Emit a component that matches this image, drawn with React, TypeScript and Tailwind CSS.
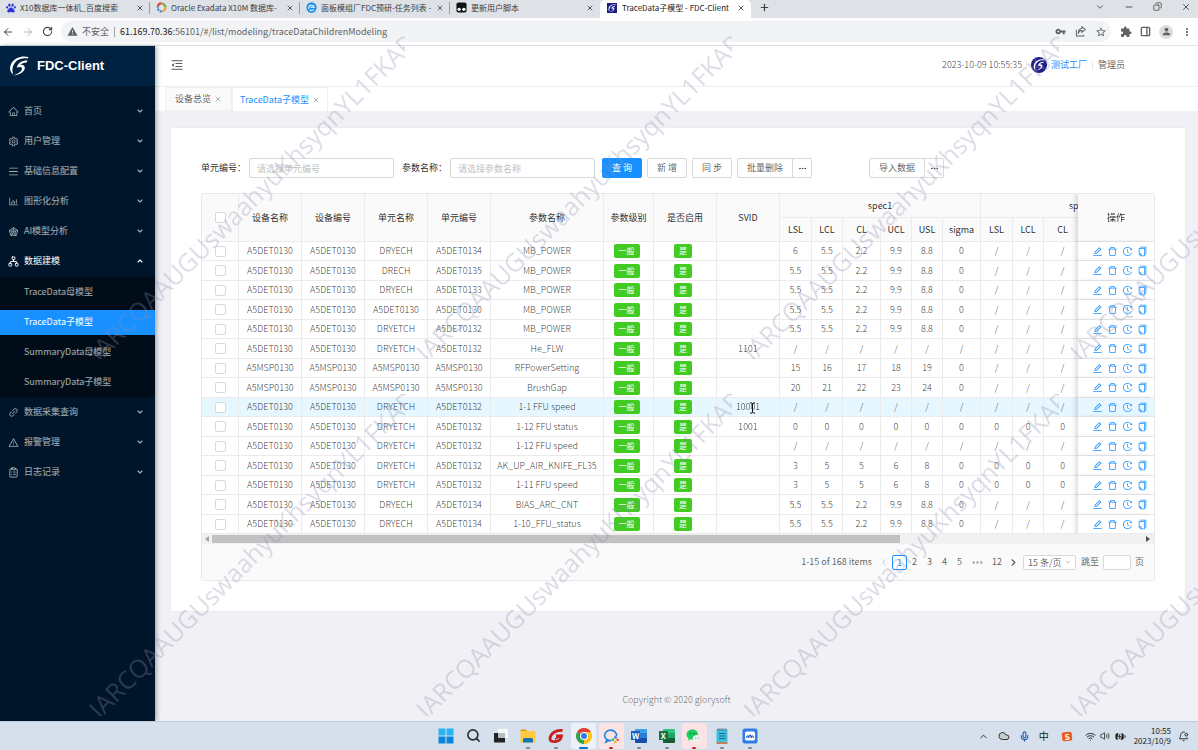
import React from "react";
import {
  AiOutlineHome, AiOutlineSetting, AiOutlineMenu, AiOutlineBarChart, AiOutlineRadarChart, AiOutlineLink,
  AiOutlineWarning, AiOutlineMenuFold, AiOutlineEdit, AiOutlineDelete, AiOutlineHistory, AiOutlineCopy,
} from "react-icons/ai";
import { MdVpnKey, MdExtension, MdPerson, MdWarning, MdMoreVert, MdOutlineStarBorder } from "react-icons/md";
import { FaPaw } from "react-icons/fa";
import {
  ArrowLeft, ArrowRight, RotateCw, X, Plus, ChevronDown, ChevronUp, ChevronLeft, ChevronRight, Minus, Copy, Cloud,
  PanelRight, Network, ClipboardList, Search, Mic, Wifi, Volume2, BatteryCharging, BellDot, Ellipsis,
} from "lucide-react";

function Swoosh({ className }: { className?: string }) {
  return (
    <svg viewBox="0 0 60 62" className={className} fill="currentColor" aria-hidden="true">
      <path d="M58 8C46 5 32 7 23 15C11 26 6 42 12 57C1 50 -1 34 8 20C18 5 40-2 59 3Z" />
      <path d="M56 14L54 20C45 20 38 23 33 28C42 26 49 30 48 38C46 50 30 60 11 60C26 56 38 48 39 40C40 34 33 33 23 36C27 22 38 14 56 14Z" />
    </svg>
  );
}

const browserTabs = [
  { title: "X10数据库一体机_百度搜索", icon: <FaPaw className="size-[10px] text-[#2a35d8]" /> },
  {
    title: "Oracle Exadata X10M 数据库-",
    icon: (
      <svg viewBox="0 0 12 12" className="size-[11px]" fill="none" strokeWidth="2.4">
        <path d="M2 5a4 4 0 0 1 4-3.4" stroke="#e0483b" />
        <path d="M6 1.6A4.3 4.3 0 0 1 10.3 6" stroke="#7a4" />
        <path d="M10.3 6A4.3 4.3 0 0 1 6 10.3" stroke="#e8a33b" />
        <path d="M6 10.3A4.3 4.3 0 0 1 2 5" stroke="#3a85d8" strokeDasharray="2 1" />
      </svg>
    ),
  },
  {
    title: "面板模组厂FDC预研-任务列表 -",
    icon: (
      <svg viewBox="0 0 12 12" className="size-[11px]">
        <circle cx="6" cy="6" r="5.6" fill="#1c8fe8" />
        <path d="M3 7.5a3 3 0 1 1 6-1.8H4.6M4 8.4a3 3 0 0 0 4.6-.4" fill="none" stroke="#fff" strokeWidth="1.1" />
      </svg>
    ),
  },
  {
    title: "更新用户脚本",
    icon: (
      <svg viewBox="0 0 12 12" className="size-[11px]">
        <rect x="0.5" y="0.5" width="11" height="11" rx="2" fill="#111" />
        <circle cx="3.4" cy="8" r="1.8" fill="#fff" />
        <circle cx="8.6" cy="8" r="1.8" fill="#fff" />
      </svg>
    ),
  },
];

function BrowserBar() {
  return (
    <div className="text-[8px] leading-[12px] text-[#3c4043]">
      <div className="flex h-[18px] items-stretch bg-[#dee1e6]">
        {browserTabs.map((t, i) => (
          <div key={t.title} className="flex w-[150px] shrink-0 items-center pb-[3px] pl-[6px]">
            {t.icon}
            <span className="ml-[4px] w-[112px] overflow-hidden whitespace-nowrap">{t.title}</span>
            <button aria-label="关闭标签页" className="ml-auto mr-[5px]"><X className="size-[8px]" strokeWidth={2.6} /></button>
            <span className={i === 3 ? "w-px" : "h-[12px] w-px bg-[#9aa0a6]"} />
          </div>
        ))}
        <div className="flex w-[151px] shrink-0 items-center rounded-t-[5px] bg-white pb-[3px] pl-[7px]">
          <span className="flex size-[10px] items-center justify-center bg-[#1d1e86] text-white"><Swoosh className="size-[8px]" /></span>
          <span className="ml-[5px] overflow-hidden whitespace-nowrap text-[#202124]">TraceData子模型 - FDC-Client</span>
          <button aria-label="关闭标签页" className="ml-auto mr-[6px]"><X className="size-[8px]" strokeWidth={2.6} /></button>
        </div>
        <button aria-label="新标签页" className="ml-[8px] pb-[3px]"><Plus className="size-[11px]" strokeWidth={2.6} /></button>
        <div className="ml-auto flex items-center gap-[19px] pb-[5px] pr-[7px]">
          <ChevronDown className="size-[10px]" />
          <Minus className="size-[10px]" />
          <Copy className="size-[9px] -scale-x-100" />
          <X className="size-[10px]" />
        </div>
      </div>
      <div className="flex h-[28px] items-center border-b border-[#dfe2e7] bg-white pl-[2px] text-[9px]">
        <button aria-label="后退" className="mr-[8px]"><ArrowLeft className="size-[12px] text-[#45484b]" /></button>
        <button aria-label="前进" className="mr-[8px]"><ArrowRight className="size-[12px] text-[#b5b8bb]" /></button>
        <button aria-label="刷新" className="mr-[8px]"><RotateCw className="size-[11px] text-[#45484b]" strokeWidth={2.4} /></button>
        <div className="flex h-[21px] flex-1 items-center rounded-full bg-[#f1f3f4] pl-[6px] pr-[4px]">
          <MdWarning className="size-[11px] text-[#5f6368]" />
          <span className="ml-[4px] text-[#5f6368]">不安全</span>
          <span className="mx-[5px] h-[10px] w-px bg-[#9aa0a6]" />
          <span className="whitespace-nowrap text-[#5f6368]"><span className="text-[#202124]">61.169.70.36</span>:56101/#/list/modeling/traceDataChildrenModeling</span>
          <span className="ml-auto flex items-center gap-[9px] text-[#5f6368]">
            <MdVpnKey className="size-[11px]" />
            <svg viewBox="0 0 12 12" className="size-[11px]" fill="none" stroke="currentColor" strokeWidth="1.1">
              <path d="M1.500 4v7h8V9.500M3.500 8.500C4 5.800 5.500 4.800 7.500 4.800V7l3.700-3.200L7.500.8v2C5 3 3.600 5 3.500 8.500z" />
            </svg>
            <MdOutlineStarBorder className="size-[12px]" />
          </span>
        </div>
        <div className="ml-[9px] mr-[5px] flex items-center gap-[8px] text-[#5f6368]">
          <MdExtension className="size-[12px]" />
          <PanelRight className="size-[11px]" strokeWidth={3} />
          <span className="flex size-[14px] items-center justify-center rounded-full bg-[#dadce0]"><MdPerson className="size-[11px]" /></span>
          <MdMoreVert className="size-[12px]" />
        </div>
      </div>
    </div>
  );
}

const menuTop = [
  { label: "首页", Icon: AiOutlineHome },
  { label: "用户管理", Icon: AiOutlineSetting },
  { label: "基础信息配置", Icon: AiOutlineMenu },
  { label: "图形化分析", Icon: AiOutlineBarChart },
  { label: "AI模型分析", Icon: AiOutlineRadarChart },
];
const menuBottom = [
  { label: "数据采集查询", Icon: AiOutlineLink },
  { label: "报警管理", Icon: AiOutlineWarning },
  { label: "日志记录", Icon: ClipboardList },
];
const subMenu = ["TraceData母模型", "TraceData子模型", "SummaryData母模型", "SummaryData子模型"];

function MenuRow({ label, Icon, open }: { label: string; Icon: React.ElementType; open?: boolean }) {
  const Arrow = open ? ChevronUp : ChevronDown;
  return (
    <button className={`flex h-[30px] w-full items-center pl-[8px] pr-[11px] ${open ? "text-white" : "text-white/65"}`}>
      <Icon className="size-[11px]" />
      <span className="ml-[5px]">{label}</span>
      <Arrow className="ml-auto size-[8px]" strokeWidth={3.4} />
    </button>
  );
}

function Sidebar() {
  return (
    <aside className="relative w-[155px] shrink-0 bg-[#001529] text-[9px] leading-[14px] shadow-[2px_0_4px_rgba(0,21,41,0.3)]">
      <div className="flex h-[40px] items-center bg-[#002140] pl-[9px] text-white">
        <Swoosh className="size-[20px]" />
        <h1 className="ml-[8px] font-['Liberation_Sans',sans-serif] text-[13px] font-bold">FDC-Client</h1>
      </div>
      <nav className="pt-[10px]">
        {menuTop.map((m) => <MenuRow key={m.label} {...m} />)}
        <MenuRow label="数据建模" Icon={Network} open />
        <ul className="mt-[1px] bg-[#000c17]">
          {subMenu.map((s, i) => (
            <li key={s} className="flex h-[30px] items-center">
              <a href="#" className={`flex h-[25px] w-full items-center pl-[24px] ${i === 1 ? "bg-[#1890ff] text-white" : "text-white/65"}`}>{s}</a>
            </li>
          ))}
        </ul>
        {menuBottom.map((m) => <MenuRow key={m.label} {...m} />)}
      </nav>
    </aside>
  );
}

const D = "A5DET0130";
const M = "A5MSP0130";
const base = ["5.5", "5.5", "2.2", "9.9", "8.8", "0"];
const none = ["/", "/", "/", "/", "/", "/"];
const zero = ["0", "0", "0", "0", "0", "0"];
const rows: { c: string[]; svid?: string; a: string[]; b: string[] }[] = [
  { c: [D, D, "DRYECH", "A5DET0134", "MB_POWER"], a: ["6", "5.5", "2.2", "9.9", "8.8", "0"], b: none },
  { c: [D, D, "DRECH", "A5DET0135", "MB_POWER"], a: base, b: none },
  { c: [D, D, "DRYECH", "A5DET0133", "MB_POWER"], a: base, b: none },
  { c: [D, D, D, D, "MB_POWER"], a: base, b: none },
  { c: [D, D, "DRYETCH", "A5DET0132", "MB_POWER"], a: base, b: none },
  { c: [D, D, "DRYETCH", "A5DET0132", "He_FLW"], svid: "1101", a: none, b: none },
  { c: [M, M, M, M, "RFPowerSetting"], a: ["15", "16", "17", "18", "19", "0"], b: none },
  { c: [M, M, M, M, "BrushGap"], a: ["20", "21", "22", "23", "24", "0"], b: none },
  { c: [D, D, "DRYETCH", "A5DET0132", "1-1 FFU speed"], svid: "10001", a: none, b: none },
  { c: [D, D, "DRYETCH", "A5DET0132", "1-12 FFU status"], svid: "1001", a: zero, b: zero },
  { c: [D, D, "DRYETCH", "A5DET0132", "1-12 FFU speed"], a: none, b: none },
  { c: [D, D, "DRYETCH", "A5DET0132", "AK_UP_AIR_KNIFE_FL35"], a: ["3", "5", "5", "6", "8", "0"], b: zero },
  { c: [D, D, "DRYETCH", "A5DET0132", "1-11 FFU speed"], a: ["3", "5", "5", "6", "8", "0"], b: zero },
  { c: [D, D, "DRYECH", "A5DET0134", "BIAS_ARC_CNT"], a: base, b: none },
  { c: [D, D, "DRYECH", "A5DET0134", "1-10_FFU_status"], a: base, b: none },
];
const heads = ["设备名称", "设备编号", "单元名称", "单元编号", "参数名称", "参数级别", "是否启用", "SVID"];
const limits = ["LSL", "LCL", "CL", "UCL", "USL", "sigma"];

const th = "border-b border-r border-[#ebebeb] bg-[#fafafa] p-0 font-normal text-black/85";
const td = "border-b border-r border-[#ebebeb] p-0";
const checkbox = "block size-[11px] mx-auto appearance-none rounded-[2px] border border-[#d9d9d9] bg-white";

function Tag({ children }: { children: string }) {
  return <span className="mr-[4px] inline-block h-[14px] rounded-[2px] bg-[#42cb20] px-[5px] text-[8px] leading-[14px] text-white align-middle">{children}</span>;
}

function DataTable() {
  return (
    <div className="overflow-hidden">
      <table className="w-full min-w-[1056px] table-fixed border-separate border-spacing-0 text-center text-[9px] leading-[12px] text-black/65">
        <colgroup>
          <col className="w-[37px]" />
          <col className="w-[63px]" /><col className="w-[63px]" /><col className="w-[63px]" /><col className="w-[63px]" />
          <col className="w-[113px]" /><col className="w-[50px]" /><col className="w-[63px]" /><col className="w-[63px]" />
          {[0, 1].map((g) => (
            <React.Fragment key={g}>
              <col className="w-[32px]" /><col className="w-[31px]" /><col className="w-[38px]" />
              <col className="w-[31px]" /><col className="w-[31px]" /><col className="w-[38px]" />
            </React.Fragment>
          ))}
          <col className="w-[76px]" />
        </colgroup>
        <thead>
          <tr className="h-[24px]">
            <th rowSpan={2} className={th}><input type="checkbox" aria-label="全选" className={checkbox} /></th>
            {heads.map((h) => <th key={h} rowSpan={2} className={th}>{h}</th>)}
            <th colSpan={6} className={th}>spec1</th>
            <th colSpan={6} className={th}>spec2</th>
            <th rowSpan={2} className="sticky right-0 border-b border-[#ebebeb] bg-[#fafafa] p-0 font-normal text-black/85 shadow-[-3px_0_4px_rgba(0,0,0,0.12)]">操作</th>
          </tr>
          <tr className="h-[24px]">
            {[...limits, ...limits].map((l, i) => <th key={i} className={th}>{l}</th>)}
          </tr>
        </thead>
        <tbody className="font-light text-black/80">
          {rows.map((r, i) => {
            const bg = i === 8 ? "bg-[#e6f7ff]" : "bg-white";
            return (
              <tr key={i} className={`${bg} odd:h-[19px] even:h-[20px]`}>
                <td className={td}><input type="checkbox" aria-label={`选择第${i + 1}行`} className={checkbox} /></td>
                {r.c.map((v, k) => <td key={k} className={td}>{v}</td>)}
                <td className={`${td} font-normal leading-none`}><Tag>一般</Tag></td>
                <td className={`${td} font-normal leading-none`}><Tag>是</Tag></td>
                <td className={`${td} relative`}>
                  {r.svid}
                  {i === 8 && (
                    <svg viewBox="0 0 7 12" className="absolute left-[32px] top-[4px] h-[12px] w-[7px]" fill="none" stroke="#111">
                      <path d="M1 1h2l.5.5L4 1h2M3.5 1.5v9M1 11h2l.5-.5.5.5h2" />
                    </svg>
                  )}
                </td>
                {[...r.a, ...r.b].map((v, k) => <td key={k} className={td}>{v}</td>)}
                <td className={`sticky right-0 border-b border-[#ebebeb] p-0 ${bg} shadow-[-3px_0_4px_rgba(0,0,0,0.12)]`}>
                  <div className="flex items-center justify-center gap-[4px] pl-[8px] text-[#1890ff]">
                    <button aria-label="编辑"><AiOutlineEdit className="size-[11px]" /></button>
                    <button aria-label="删除"><AiOutlineDelete className="size-[11px]" /></button>
                    <button aria-label="历史"><AiOutlineHistory className="size-[11px]" /></button>
                    <button aria-label="复制"><AiOutlineCopy className="size-[11px]" /></button>
                  </div>
                </td>
              </tr>
            );
          })}
        </tbody>
      </table>
    </div>
  );
}

const field = "h-[20px] w-[145px] rounded-[2px] border border-[#d9d9d9] bg-white px-[7px] placeholder:text-[#bfbfbf]";
const btn = "h-[20px] rounded-[2px] border border-[#d9d9d9] bg-white text-black/65";

function Split({ label }: { label: string }) {
  return (
    <div className="flex">
      <button className={`${btn} w-[56px] rounded-r-none`}>{label}</button>
      <button aria-label={`${label}更多`} className={`${btn} -ml-px w-[20px] rounded-l-none`}><Ellipsis className="mx-auto size-[9px]" /></button>
    </div>
  );
}

function Pager() {
  const page = "h-[15px] w-[15px]";
  return (
    <div className="flex h-[36px] items-center justify-end bg-[#fafafa] pr-[10px] text-black/65">
      <span className="mr-[5px]">1-15 of 168 items</span>
      <button aria-label="上一页" className={`${page} text-black/25`}><ChevronLeft className="mx-auto size-[10px]" /></button>
      <button className={`${page} rounded-[2px] border border-[#1890ff] bg-white leading-[13px] text-[#1890ff]`}>1</button>
      {["2", "3", "4", "5"].map((p) => <button key={p} className={page}>{p}</button>)}
      <Ellipsis className="mx-[4px] size-[13px] text-black/35" strokeWidth={2.4} />
      <button className="h-[15px] w-[18px]">12</button>
      <button aria-label="下一页" className={page}><ChevronRight className="mx-auto size-[11px]" strokeWidth={2.4} /></button>
      <span className="relative ml-[2px] flex items-center">
        <select aria-label="每页条数" className="h-[15px] w-[53px] appearance-none rounded-[2px] border border-[#d9d9d9] bg-white pl-[4px] leading-[13px]">
          <option>15 条/页</option>
        </select>
        <ChevronDown className="pointer-events-none absolute right-[4px] size-[8px] text-black/35" />
      </span>
      <label className="ml-[5px] flex items-center gap-[4px]">
        跳至
        <input className="h-[15px] w-[28px] rounded-[2px] border border-[#d9d9d9] bg-white" />
        页
      </label>
    </div>
  );
}

function Main() {
  return (
    <main className="flex min-w-0 flex-1 flex-col bg-[#f0f0f5] text-[9px] leading-[14px] text-black/65">
      <header className="flex h-[41px] items-center border-b border-[#f0f0f0] bg-white pb-[2px] pl-[15px] pr-[73px]">
        <button aria-label="收起菜单"><AiOutlineMenuFold className="size-[14px]" /></button>
        <time className="ml-auto font-light text-black/80">2023-10-09 10:55:35</time>
        <span className="mx-[4px] h-[9px] w-px bg-[#e8e8e8]" />
        <span className="flex size-[16px] items-center justify-center rounded-full bg-[#1d1e86] text-white"><Swoosh className="size-[12px]" /></span>
        <a href="#" className="ml-[4px] text-[#1890ff]">测试工厂</a>
        <span className="mx-[5px] h-[9px] w-px bg-[#e8e8e8]" />
        <span>管理员</span>
      </header>
      <div className="flex h-[24px] bg-white pl-[10px]">
        <div className="flex w-[67px] items-center justify-center gap-[3px] border border-[#efefef] bg-[#fafafa]">
          <a href="#">设备总览</a><button aria-label="关闭"><X className="size-[8px] text-black/45" /></button>
        </div>
        <div className="flex w-[96px] items-center justify-center gap-[3px] border-x border-t border-[#efefef] bg-white">
          <a href="#" className="text-[#1890ff]">TraceData子模型</a><button aria-label="关闭"><X className="size-[8px] text-black/45" /></button>
        </div>
      </div>
      <section className="ml-[15px] mr-[12px] mt-[16px] border border-[#ececf0] bg-white p-[30px]">
        <form className="flex items-center" onSubmit={(e) => e.preventDefault()}>
          <label htmlFor="unit" className="w-[48px] text-black/85">单元编号：</label>
          <input id="unit" placeholder="请选择单元编号" className={field} />
          <label htmlFor="param" className="ml-[8px] w-[48px] text-black/85">参数名称：</label>
          <input id="param" placeholder="请选择参数名称" className={field} />
          <div className="ml-[7px] flex gap-[5px]">
            <button className="h-[20px] w-[40px] rounded-[2px] bg-[#1890ff] text-white">查 询</button>
            <button className={`${btn} w-[40px]`}>新 增</button>
            <button className={`${btn} w-[40px]`}>同 步</button>
            <Split label="批量删除" />
          </div>
          <div className="ml-[57px]"><Split label="导入数据" /></div>
        </form>
        <div className="mt-[15px] overflow-hidden rounded-[3px] border border-[#e8e8e8]">
          <DataTable />
          <div className="flex h-[10px] items-center bg-[#f1f1f1]">
            <span className="flex w-[10px] justify-center"><svg viewBox="0 0 4 6" className="h-[6px] w-[4px] fill-[#a3a3a3]"><path d="M4 0v6L0 3z" /></svg></span>
            <div className="flex-1"><div className="h-[8px] w-[74%] bg-[#c1c1c1]" /></div>
            <span className="flex w-[12px] justify-center"><svg viewBox="0 0 4 6" className="h-[6px] w-[4px] fill-[#505050]"><path d="M0 0v6l4-3z" /></svg></span>
          </div>
          <Pager />
        </div>
      </section>
      <footer className="mt-auto pb-[14px] text-center font-light text-black/60">Copyright © 2020 glorysoft</footer>
    </main>
  );
}

const ic = "size-[16px]";
const apps: { name: string; mark?: string; tile?: string; icon: React.ReactNode }[] = [
  { name: "开始", icon: <svg viewBox="0 0 16 16" className={ic}><path d="M.5.5h7v7h-7zM8.5.5h7v7h-7z" fill="#27b4f0" /><path d="M.5 8.5h7v7h-7zM8.5 8.5h7v7h-7z" fill="#0a86dc" /></svg> },
  { name: "搜索", icon: <Search className="size-[15px] text-[#2b2f33]" strokeWidth={2.6} /> },
  { name: "任务视图", icon: <svg viewBox="0 0 16 16" className={ic}><rect x="5" y="1" width="10" height="9" fill="#f7f8f9" /><rect x="1" y="5" width="11" height="9.5" fill="#222" /><rect x="5" y="5" width="7" height="5" fill="#b9bcc0" /></svg> },
  { name: "文件资源管理器", mark: "bg-[#7d8794]", icon: <svg viewBox="0 0 16 16" className={ic}><path d="M.5 2.5a1 1 0 0 1 1-1h4.5l1.5 2h-7z" fill="#d99a16" /><rect x=".5" y="3" width="15" height="11.5" rx="1" fill="#fcc93f" /><path d="M3 14.5v-3a1.5 1.5 0 0 1 1.500-1.500h7A1.500 1.500 0 0 1 13 11.500v3z" fill="#1476b8" /></svg> },
  { name: "Glory", mark: "bg-[#7d8794]", icon: <svg viewBox="0 0 16 16" className={ic} fill="none" stroke="#c9201f"><path d="M14.500 2.500C8 1.500 2.500 5.500 2 10.500c0 3 3 3.500 6 3 3-.6 5-2.500 5.500-5.500H8" strokeWidth="2.800" /><path d="M12 8.500l-5 2.500" strokeWidth="1.500" /></svg> },
  { name: "Chrome", mark: "bg-[#0a73d0]", tile: "bg-[#ebf1f7]", icon: (
    <svg viewBox="0 0 16 16" className={ic}>
      <path d="M8 8L1.070 4A8 8 0 0 1 14.930 4z" fill="#e0402f" />
      <path d="M8 8L14.930 4A8 8 0 0 1 8 16z" fill="#fbc116" />
      <path d="M8 8V16A8 8 0 0 1 1.070 4z" fill="#31a350" />
      <path d="M8 4h6.930l-3.500 6z" fill="#fbc116" /><path d="M4.540 10L1.070 4L8 8z" fill="#31a350" />
      <circle cx="8" cy="8" r="4" fill="#fff" /><circle cx="8" cy="8" r="3" fill="#2f7bea" />
    </svg>) },
  { name: "企业微信", mark: "bg-[#c42b1c]", tile: "bg-[#fbe3e4]", icon: (
    <svg viewBox="0 0 16 16" className={ic} fill="none">
      <path d="M13.500 8A6 5.200 0 1 0 8.500 12.500M4 11.500L3 14l3-1.500" stroke="#1c86e6" strokeWidth="1.700" />
      <circle cx="12.500" cy="9.300" r="1.400" fill="#2f7bea" /><circle cx="14.600" cy="11.800" r="1.300" fill="#f0562f" />
      <circle cx="12.300" cy="14" r="1.300" fill="#fbb416" /><circle cx="10" cy="11.700" r="1.400" fill="#3fc24c" />
    </svg>) },
  { name: "Word", mark: "bg-[#7d8794]", icon: <Office letter="W" dark="bg-[#1c5bbd]" light="bg-[linear-gradient(#3fa0ea_30%,#2b7cd3_30%_65%,#174ea6_65%)]" /> },
  { name: "Excel", mark: "bg-[#7d8794]", icon: <Office letter="X" dark="bg-[#13733f]" light="bg-[linear-gradient(#33c481_30%,#21a366_30%_65%,#185c37_65%)]" /> },
  { name: "微信", mark: "bg-[#c42b1c]", tile: "bg-[#fbe3e4]", icon: (
    <svg viewBox="0 0 16 16" className={ic}>
      <path d="M6.500 1.500C3 1.500.5 3.800.5 6.500c0 1.600.8 2.900 2 3.800L2 12.500l2.400-1.200c2.800.7 7.600-.3 7.600-5C12 3.500 9.500 1.500 6.500 1.500z" fill="#18cf5f" />
      <circle cx="4.600" cy="5.500" r=".8" fill="#0c7a35" /><circle cx="8.200" cy="5.500" r=".8" fill="#0c7a35" />
      <path d="M11 7c-2.500 0-4.300 1.500-4.300 3.500S8.500 14 11 14l2.700 1-.5-1.600C14.600 12.700 15.500 11.800 15.500 10.500 15.500 8.500 13.500 7 11 7z" fill="#eceff1" />
      <circle cx="9.700" cy="10" r=".6" fill="#8a9298" /><circle cx="12.500" cy="10" r=".6" fill="#8a9298" />
    </svg>) },
  { name: "记事本", mark: "bg-[#7d8794]", icon: <svg viewBox="0 0 16 16" className={ic}><rect x="2.500" y="2" width="11" height="12" fill="#3fc0dd" /><path d="M4 .5v2M6 .5v2M8 .5v2M10 .5v2M12 .5v2" stroke="#17536b" /><path d="M5 5.500h6.500M5 8h6.500M5 10.500h6.500" stroke="#126a8c" /><path d="M2.500 15h11" stroke="#b5612d" strokeWidth="1.500" /></svg> },
  { name: "会议", mark: "bg-[#7d8794]", icon: <svg viewBox="0 0 16 16" className={ic}><rect x=".5" y=".5" width="15" height="15" rx="2.500" fill="#2f7bea" /><rect x="3" y="3.500" width="10" height="9" rx="1.500" fill="#fff" /><path d="M4.500 10c.5-3 2-3 2.300 0 .5-4 2.200-4 2.400 0 .4-3 1.800-3 2.300 0" fill="none" stroke="#1c4fc4" strokeWidth="1.200" /></svg> },
];

function Office({ letter, dark, light }: { letter: string; dark: string; light: string }) {
  return (
    <span className="flex h-[14px] w-[16px] items-center">
      <span className={`z-10 flex size-[9px] shrink-0 items-center justify-center text-[8px] font-bold leading-none text-white ${dark}`}>{letter}</span>
      <span className={`-ml-[5px] h-[14px] w-[12px] rounded-[1px] ${light}`} />
    </span>
  );
}

function Taskbar() {
  return (
    <div className="relative z-10 grid h-[29px] grid-cols-[1fr_332px_1fr] border-t border-[#bccadb] bg-[#d6e0ec] text-[8px] leading-[10px] text-[#222]">
      <span />
      <div className="grid grid-cols-12 pt-[1px]">
        {apps.map((a) => (
          <button key={a.name} aria-label={a.name} className="flex h-[26px] items-center justify-start">
            <span className={`relative flex h-[26px] w-[25px] items-center justify-center rounded-[3px] pb-px ${a.tile ?? ""}`}>
              {a.icon}
              {a.mark && <span className={`absolute bottom-0 h-[2px] rounded-full ${a.name === "Chrome" ? "w-[9px]" : "w-[4px]"} ${a.mark}`} />}
            </span>
          </button>
        ))}
      </div>
      <div className="flex items-center justify-end pr-[9px]">
        <ChevronUp className="size-[11px]" />
        <Cloud className="ml-[9px] size-[12px] fill-[#c9ccd0] text-[#333]" />
        <Mic className="ml-[9px] size-[11px] text-[#2b62b8]" strokeWidth={2.6} />
        <span className="ml-[9px] text-[10px]">中</span>
        <span className="ml-[13px] flex h-[9px] w-[10px] -rotate-6 items-center justify-center rounded-[2px] bg-[#ee5a24] text-[8px] font-bold text-white">S</span>
        <Wifi className="ml-[13px] size-[11px]" />
        <Volume2 className="ml-[4px] size-[10px]" />
        <BatteryCharging className="ml-[5px] size-[11px] fill-[#222]" />
        <span className="ml-[8px] text-right">10:55<br />2023/10/9</span>
        <BellDot className="ml-[7px] size-[11px]" />
      </div>
    </div>
  );
}

function Watermark() {
  return (
    <div aria-hidden="true" className="pointer-events-none absolute inset-x-0 top-[2px] z-20 grid grid-cols-[repeat(4,327px)] overflow-hidden pl-[78px]">
      {Array.from({ length: 8 }, (_, i) => (
        <div key={i} className="flex h-[357px] items-end overflow-hidden pl-[24px]">
          <span className="-mb-[6px] origin-bottom-left -rotate-45 whitespace-nowrap font-['Open_Sans',sans-serif] text-[25px] font-medium leading-[25px] text-[#9090b2]/30">IARCQAAUGUswaahyuKhsyqnYL1FKAP</span>
        </div>
      ))}
    </div>
  );
}

export default function App() {
  return (
    <div className="relative flex min-h-screen flex-col overflow-hidden font-['Noto_Sans_CJK_SC',sans-serif]">
      <BrowserBar />
      <div className="flex flex-1">
        <Sidebar />
        <Main />
      </div>
      <Taskbar />
      <Watermark />
    </div>
  );
}
